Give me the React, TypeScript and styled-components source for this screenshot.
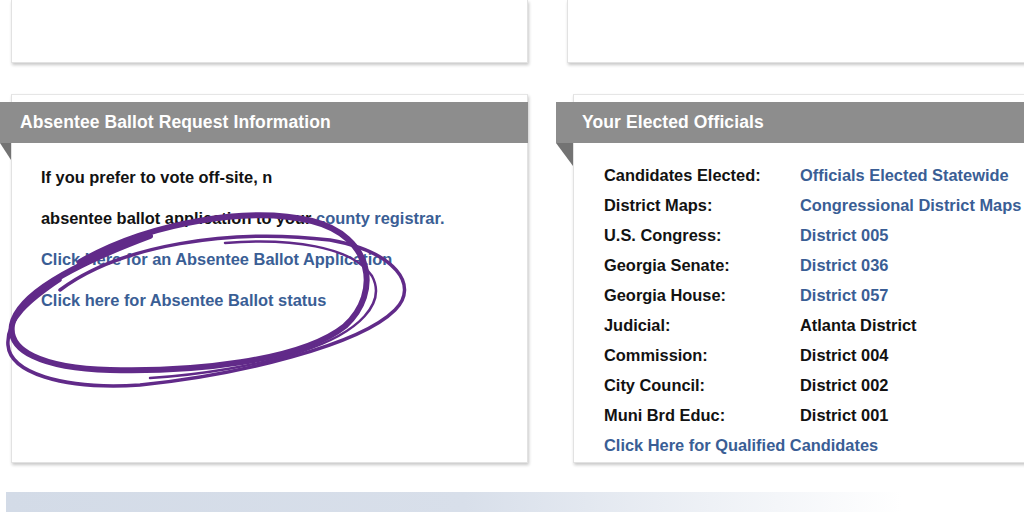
import styled, { createGlobalStyle } from 'styled-components';

const GlobalStyle = createGlobalStyle`
  html, body {
    margin: 0;
    padding: 0;
    background: #ffffff;
  }
  body {
    font-family: 'Liberation Sans', Arial, sans-serif;
  }
`;

const Page = styled.div`
  position: relative;
  width: 1024px;
  height: 512px;
  overflow: hidden;
  background: #ffffff;
`;

const Row = styled.div<{ $gap: number; $top?: number }>`
  display: flex;
  gap: ${(p) => p.$gap}px;
  padding-left: 11px;
  margin-top: ${(p) => p.$top ?? 0}px;
`;

const Card = styled.div<{ $width: number; $height: number; $cut?: boolean }>`
  position: relative;
  flex: none;
  box-sizing: border-box;
  width: ${(p) => p.$width}px;
  height: ${(p) => p.$height}px;
  background: #ffffff;
  border: 1px solid #e2e2e2;
  border-top: ${(p) => (p.$cut ? 'none' : '1px solid #e6e6e6')};
  box-shadow: 1px 2px 3px rgba(0, 0, 0, 0.22);
`;

const Band = styled.div<{ $pull: number }>`
  position: relative;
  height: 41px;
  margin-top: 7px;
  margin-left: -${(p) => p.$pull + 1}px;
  margin-right: -1px;
  padding-left: ${(p) => p.$pull + 9}px;
  background: #8d8d8d;
  color: #ffffff;
  font-size: 17.5px;
  font-weight: 700;
  line-height: 40px;
  letter-spacing: 0.1px;

  &::after {
    content: '';
    position: absolute;
    left: 0;
    top: 41px;
    width: ${(p) => p.$pull}px;
    height: ${(p) => p.$pull + 6}px;
    background: #737373;
    clip-path: polygon(0 0, 100% 0, 100% 100%);
  }
`;

const Body = styled.div<{ $top: number; $left: number }>`
  padding: ${(p) => p.$top}px 0 0 ${(p) => p.$left}px;
  font-size: 16.4px;
  font-weight: 700;
  color: #121212;
`;

const Line = styled.div`
  height: 41px;
  line-height: 41px;
  white-space: nowrap;
`;

const Link = styled.span`
  color: #3a5e95;
`;

const OfficialRow = styled.div`
  display: grid;
  grid-template-columns: 196px auto;
  height: 30px;
  line-height: 30px;
  white-space: nowrap;
`;

const Footer = styled.div`
  height: 20px;
  margin: 29px 0 0 6px;
  background: linear-gradient(90deg, #d3dbe7 0%, #d8dfea 45%, #ffffff 88%);
`;

const Scribble = styled.svg`
  position: absolute;
  left: 0;
  top: 0;
  pointer-events: none;
`;

const officials: { label: string; value: string; link: boolean }[] = [
  { label: 'Candidates Elected:', value: 'Officials Elected Statewide', link: true },
  { label: 'District Maps:', value: 'Congressional District Maps', link: true },
  { label: 'U.S. Congress:', value: 'District 005', link: true },
  { label: 'Georgia Senate:', value: 'District 036', link: true },
  { label: 'Georgia House:', value: 'District 057', link: true },
  { label: 'Judicial:', value: 'Atlanta District', link: false },
  { label: 'Commission:', value: 'District 004', link: false },
  { label: 'City Council:', value: 'District 002', link: false },
  { label: 'Muni Brd Educ:', value: 'District 001', link: false },
];

function App() {
  return (
    <Page>
      <GlobalStyle />
      <Row $gap={39}>
        <Card $width={517} $height={63} $cut />
        <Card $width={470} $height={63} $cut />
      </Row>

      <Row $gap={45} $top={31}>
        <Card $width={517} $height={369}>
          <Band $pull={11}>Absentee Ballot Request Information</Band>
          <Body $top={14} $left={29}>
            <Line>If you prefer to vote off-site, n</Line>
            <Line>
              absentee ballot application to your <Link>county registrar.</Link>
            </Line>
            <Line>
              <Link>Click Here for an Absentee Ballot Application</Link>
            </Line>
            <Line>
              <Link>Click here for Absentee Ballot status</Link>
            </Line>
          </Body>
        </Card>

        <Card $width={470} $height={369}>
          <Band $pull={17}>Your Elected Officials</Band>
          <Body $top={17} $left={30}>
            {officials.map((o) => (
              <OfficialRow key={o.label}>
                <span>{o.label}</span>
                {o.link ? <Link>{o.value}</Link> : <span>{o.value}</span>}
              </OfficialRow>
            ))}
            <OfficialRow>
              <Link>Click Here for Qualified Candidates</Link>
            </OfficialRow>
          </Body>
        </Card>
      </Row>

      <Footer />

      {/* hand drawn circle around the absentee links */}
      <Scribble width={1024} height={512} viewBox="0 0 1024 512">
        <g fill="none" stroke="#612a89" strokeLinecap="round" strokeLinejoin="round">
          <path
            strokeWidth={6}
            d="M 80 262 C 150 222, 250 206, 312 221 C 372 236, 382 292, 345 326 C 300 362, 190 372, 110 370 C 40 368, 8 350, 12 325 C 18 295, 70 266, 150 236"
          />
          <path
            strokeWidth={3.5}
            d="M 60 290 C 120 245, 230 228, 330 240 C 395 252, 420 285, 395 310 C 360 345, 240 375, 140 385 C 60 390, 10 372, 8 345 C 6 320, 30 300, 60 280"
          />
          <path
            strokeWidth={2.5}
            d="M 225 243 C 290 238, 352 246, 372 276 C 386 302, 362 332, 300 352 C 260 365, 200 375, 150 378"
          />
        </g>
      </Scribble>
    </Page>
  );
}

export default App;
